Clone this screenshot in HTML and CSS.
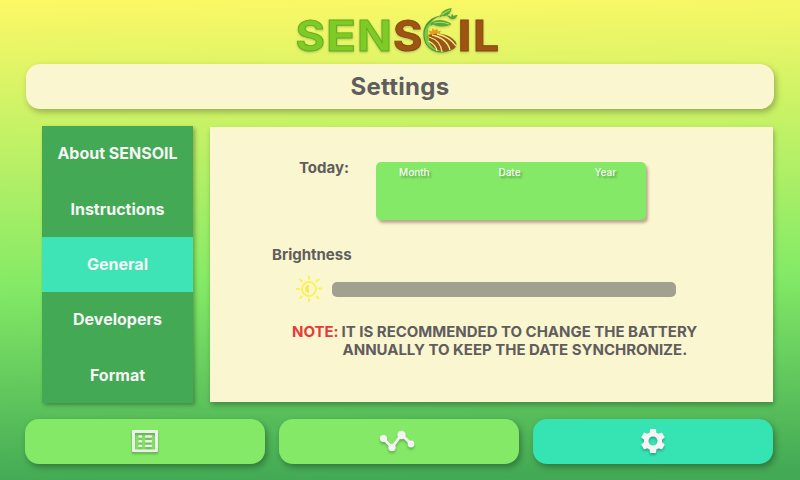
FILE: index.html
```html
<!DOCTYPE html>
<html lang="en">
<head>
<meta charset="utf-8">
<title>SENSOIL Settings</title>
<link rel="stylesheet" href="styles.css">
</head>
<body>
<div class="screen">
  <header class="brand">
    <svg class="logo" width="215" height="60" viewBox="290 0 215 60" role="img" aria-label="SENSOIL">
      <g class="green">
        <text x="295.500" y="50.500" textLength="29.500" lengthAdjust="spacingAndGlyphs">S</text>
        <text x="326" y="50.500" textLength="30" lengthAdjust="spacingAndGlyphs">E</text>
        <text x="357" y="50.500" textLength="35" lengthAdjust="spacingAndGlyphs">N</text>
      </g>
      <g class="brown">
        <text x="393" y="50.500" textLength="29.500" lengthAdjust="spacingAndGlyphs">S</text>
        <text x="457.500" y="50.500" textLength="14" lengthAdjust="spacingAndGlyphs">I</text>
        <text x="473" y="50.500" textLength="26" lengthAdjust="spacingAndGlyphs">L</text>
      </g>
      <path fill="#489c31" d="M444 15C431 16 423 24 423.300 35C423.700 46 432 53 442 52.500C448 52.200 453 50 456 46C449 51 440 51 434 47C426 42 425 27 433 20C436 17.500 440 16 444 15Z"/>
      <path fill="#7ac943" d="M433 21C425 28 425 41 434 47C438 50 444 51 449 49C440 54 427 50 425 39C423 30 427 24 433 21Z"/>
      <path fill="#e5a01c" d="M428 35L430.500 33.500L428.500 30.500L432 31.500L432.500 28L435 30.500L437 28.500L438 31.500L441 30.500L439.500 33.500L442 35L437 38L428 38Z"/>
      <path fill="#9b5516" d="M429 35C441 31 455 37 456.500 44L455 48C451 51 444 52.500 438 50C432 48 428 42 429 35Z"/>
      <path fill="none" stroke="#f5ed80" stroke-width="1.300" d="M429 37C436 39 441 44 442 52M432 35C441 37 448 42 450 50M437 34C446 36 452 40 456 46M428 41C433 43 436 46 437 51"/>
      <path fill="#55a936" d="M431 23C436 18.500 445 19 451.500 24C445 27.500 438 27 433 24.500L430 26ZM440 17C441 11 446 9 451.500 8C451 13 448 16.500 442 16L438 19ZM446 15C449 15.500 450 16 451 17L452 13.500L453.500 16C456 14.500 457.500 15 457.500 15C456 19 453 20 450 18.500Z"/>
      <path fill="none" stroke="#a7dc5c" stroke-width="1.100" d="M434 23C440 21.500 445 22.500 449 24M441.500 15C444 12.500 448 11 450 10"/>
    </svg>
  </header>
  <h1 class="title">Settings</h1>
  <main class="content">
    <nav class="menu">
      <a class="menu-item">About SENSOIL</a>
      <a class="menu-item">Instructions</a>
      <a class="menu-item active">General</a>
      <a class="menu-item">Developers</a>
      <a class="menu-item">Format</a>
    </nav>
    <section class="panel">
      <div class="today">
        <span class="today-label">Today:</span>
        <div class="date-box"><span>Month</span><span>Date</span><span>Year</span></div>
      </div>
      <div class="brightness-label">Brightness</div>
      <div class="brightness">
        <svg class="sun" width="28" height="28" viewBox="0 0 28 28">
          <g fill="none" stroke="#faf257" stroke-width="1.900">
            <circle cx="14" cy="14" r="7"/>
            <path stroke-linecap="round" d="M14 1.500V4M14 24.200V26.500M1.500 14H4.200M23.800 13.500H26.500M5 4.700L6.800 6.500M21.300 6.500L23.500 4.700M21.700 21.500L23.500 23.300M5 23L6.700 21.300"/>
          </g>
          <path fill="#faea50" d="M14 10A4 4 0 0 0 14 18Z"/>
        </svg>
        <div class="slider"></div>
      </div>
      <div class="note">
        <strong>NOTE:</strong>
        <p><span class="line-one">IT IS RECOMMENDED TO CHANGE THE BATTERY</span><span class="line-two">ANNUALLY TO KEEP THE DATE SYNCHRONIZE.</span></p>
      </div>
    </section>
  </main>
  <footer class="tabs">
    <a class="tab">
      <svg class="icon" width="40" height="30" viewBox="0 0 40 30">
        <path fill="#eee" fill-rule="evenodd" d="M8 3H32Q33 3 33 4V24Q33 25 32 25H8Q7 25 7 24V4Q7 3 8 3ZM10 6V22.500H30V6Z"/>
        <path stroke="#eee" stroke-width="2.400" stroke-linecap="round" d="M14.500 9.500H16M21 9.500H26M14.500 14.200H16M21 14.200H26M14.500 18.900H16M21 18.900H26"/>
      </svg>
    </a>
    <a class="tab">
      <svg class="icon" width="40" height="30" viewBox="0 0 40 30">
        <path fill="none" stroke="#f4f4f4" stroke-width="2.800" d="M4.500 11.500L13 20.500L22.500 7.500L32 17"/>
        <g fill="#f4f4f4"><circle cx="4.500" cy="11.500" r="3.600"/><circle cx="13" cy="20.500" r="3.700"/><circle cx="22.500" cy="8" r="4.200"/><circle cx="32" cy="17" r="3.400"/></g>
      </svg>
    </a>
    <a class="tab active">
      <svg class="icon gear" width="30" height="30" viewBox="0 0 24 24">
        <path fill="#f4f4f4" d="M19.140 12.940c.04-.3.060-.61.060-.94 0-.32-.02-.64-.07-.94l2.030-1.580c.18-.14.230-.41.120-.61l-1.920-3.320c-.12-.22-.37-.29-.59-.22l-2.390.96c-.5-.38-1.030-.7-1.620-.94l-.36-2.540c-.04-.24-.24-.41-.48-.41h-3.840c-.24 0-.43.170-.47.410l-.36 2.540c-.59.240-1.130.570-1.620.94l-2.390-.96c-.22-.08-.47 0-.59.220L2.740 8.870c-.12.210-.08.470.12.610l2.030 1.580c-.05.300-.09.630-.09.940s.02.640.070.940l-2.030 1.580c-.18.140-.23.410-.12.610l1.920 3.320c.12.220.37.290.59.220l2.390-.96c.5.380 1.030.7 1.620.94l.36 2.540c.05.240.24.410.48.410h3.840c.24 0 .44-.17.470-.41l.36-2.540c.59-.24 1.130-.56 1.620-.94l2.390.96c.22.080.47 0 .59-.22l1.920-3.320c.12-.22.070-.47-.12-.61l-2.010-1.580zM12 15.600c-1.980 0-3.600-1.620-3.600-3.600s1.620-3.600 3.600-3.600 3.600 1.620 3.600 3.600-1.620 3.600-3.600 3.600z"/>
      </svg>
    </a>
  </footer>
</div>
</body>
</html>
```
FILE: styles.css
```css
* { box-sizing: border-box; }
body { margin: 0; }
.screen {
  width: 800px;
  height: 480px;
  overflow: hidden;
  padding: 0 26px;
  background: linear-gradient(179deg, #fdf866 0%, #84ea66 58%, #43a955 98%);
  font-family: Inter, sans-serif;
  font-weight: 700;
  color: #5f5d5d;
}
.brand { height: 64px; padding-left: 264px; }
.logo {
  display: block;
  font-family: Inter, sans-serif;
  font-weight: 700;
  font-size: 42.500px;
  filter: drop-shadow(0 1px 1px #5555);
}
.green { fill: #7dcb25; stroke: #64ae20; stroke-width: .9; }
.brown { fill: #a05412; stroke: #854910; stroke-width: .9; }
.title {
  width: 748px;
  height: 45px;
  margin: 0;
  border-radius: 14px;
  background: #faf6cf;
  box-shadow: 2px 3px 6px rgba(0, 0, 0, .28);
  font-size: 24px;
  font-weight: 700;
  letter-spacing: .25px;
  line-height: 46px;
  text-align: center;
}
.content {
  display: flex;
  gap: 17px;
  height: 277px;
  margin: 17px 0 0 16px;
}
.menu {
  display: flex;
  flex-direction: column;
  width: 151px;
  background: #44a955;
  box-shadow: 2px 2px 4px rgba(0, 0, 0, .3);
}
.menu-item {
  display: flex;
  flex: 1;
  align-items: center;
  justify-content: center;
  padding-bottom: 1px;
  color: #f5f5f5;
  font-size: 16px;
}
.menu-item.active { background: #3ee4b5; }
.panel {
  width: 563px;
  height: 275px;
  margin-top: 1px;
  padding-top: 35px;
  background: #faf6cf;
  box-shadow: 1px 3px 5px rgba(0, 0, 0, .28);
}
.today { display: flex; gap: 27px; padding-left: 89px; height: 58px; }
.today-label { width: 50px; font-size: 15px; line-height: 12px; }
.date-box {
  display: flex;
  justify-content: space-between;
  width: 270px;
  padding: 4px 30px 0 23px;
  border-radius: 5px;
  background: #84e966;
  box-shadow: 2px 3px 3px rgba(90, 50, 50, .4);
  color: #f8fff5;
  font-size: 10px;
  font-weight: 500;
  line-height: 13px;
  text-shadow: 2px 2px 2px rgba(0, 0, 0, .3);
}
.date-box span:nth-child(2) { margin-right: 5px; }
.brightness-label { margin: 25px 0 0 62px; font-size: 15px; line-height: 20px; }
.brightness { display: flex; align-items: center; gap: 8px; margin: 10px 0 0 86px; height: 28px; }
.sun { position: relative; left: -1px; }
.slider { width: 344px; height: 15px; border-radius: 5px; background: #a2a08e; }
.note { display: flex; gap: 3px; margin: 20px 0 0 82px; font-size: 15px; line-height: 18px; letter-spacing: -.02px; white-space: nowrap; }
.note strong { color: #e53b3b; font-weight: 700; }
.note p { margin: 0; }
.note span { display: block; }
.line-two { padding-left: 1px; }
.tabs { display: flex; gap: 14px; margin: 16px 0 0 -1px; }
.tab {
  display: flex;
  align-items: center;
  justify-content: center;
  width: 240px;
  height: 45px;
  border-radius: 14px;
  background: #84e966;
  box-shadow: 2px 3px 6px rgba(0, 0, 0, .32);
}
.tab.active { background: #36e3b2; }
.icon { filter: drop-shadow(0 2px 1px rgba(0, 0, 0, .25)); }
.gear { margin-bottom: 1px; }
```
